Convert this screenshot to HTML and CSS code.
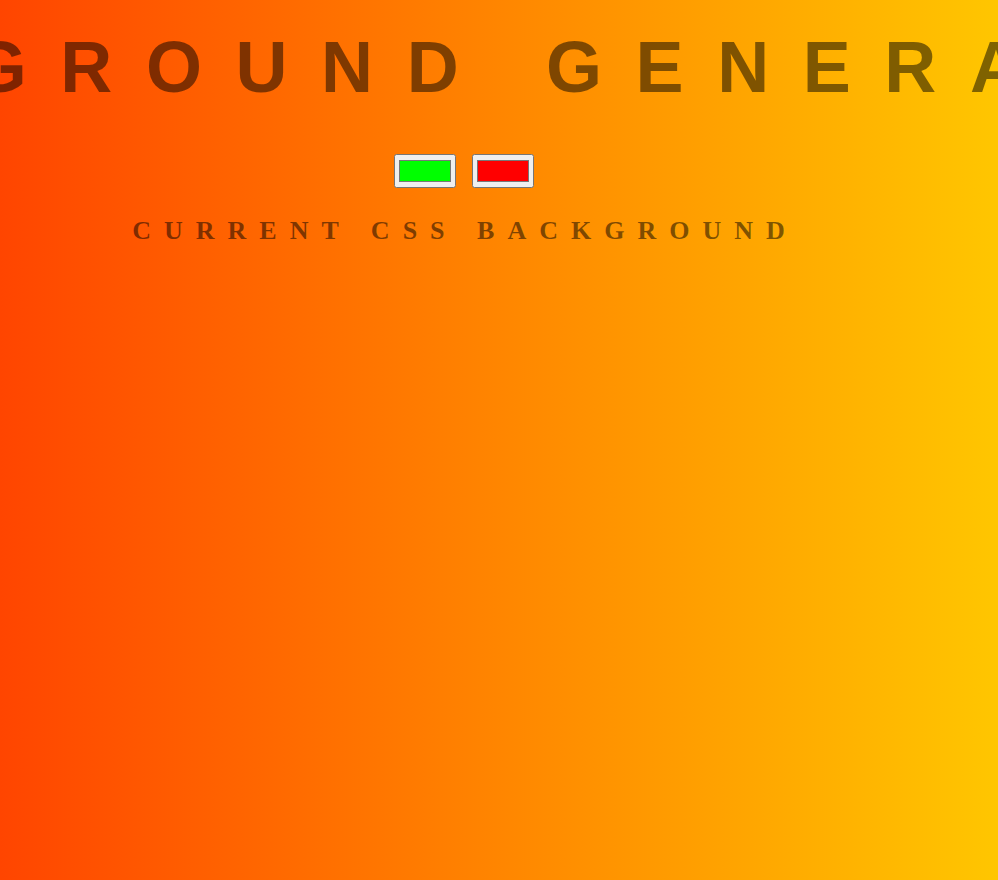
FILE: index.html
```html
<!DOCTYPE html>
<html lang="en">
<head>
<meta charset="utf-8">
<title>Background Generator</title>
<link rel="stylesheet" href="styles.css">
</head>
<body>
  <main class="page">
    <h1 class="title">Background Generator</h1>
    <div class="pickers">
      <input class="color1" type="color" name="color1" value="#00ff00">
      <input class="color2" type="color" name="color2" value="#ff0000">
    </div>
    <h3 class="current">Current CSS Background</h3>
  </main>
</body>
</html>
```
FILE: styles.css
```css
html, body {
  height: 100%;
}
body {
  margin: 0;
  background: linear-gradient(to right, #ff4500, #ffc600);
  color: rgba(0, 0, 0, 0.5);
  text-transform: uppercase;
  font-family: "Liberation Serif", "Times New Roman", serif;
  overflow: hidden;
}
.page {
  display: flex;
  flex-direction: column;
  align-items: center;
  padding: 27px 68px 0 0;
}
.title {
  margin: 0 0 47px;
  font: 700 72px/80px "Liberation Sans", Arial, sans-serif;
  letter-spacing: 33.6px;
  white-space: nowrap;
}
.pickers {
  display: flex;
  gap: 16px;
  margin-right: 3px;
}
.pickers input {
  width: 62px;
  height: 34px;
  margin: 0;
}
.current {
  margin: 28px 0 0;
  font: 700 26px/29px "Liberation Serif", "Times New Roman", serif;
  letter-spacing: 0.5em;
  white-space: nowrap;
}
```
